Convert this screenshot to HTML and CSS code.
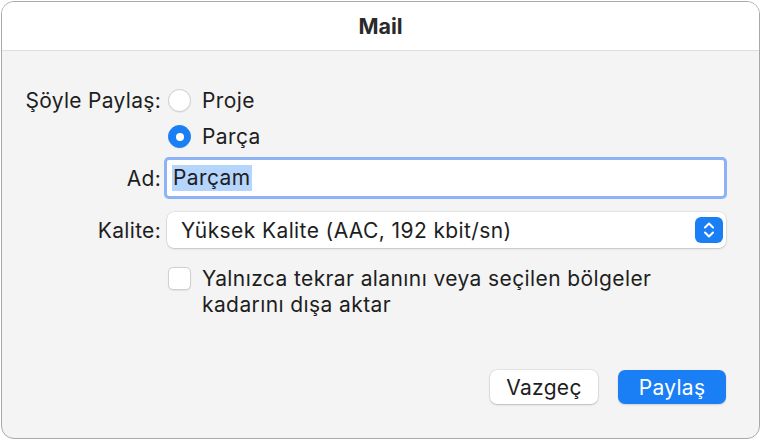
FILE: index.html
```html
<!DOCTYPE html>
<html lang="tr">
<head>
<meta charset="utf-8">
<title>Mail</title>
<link rel="stylesheet" href="styles.css">
</head>
<body>
<div class="window">
  <div class="titlebar">Mail</div>
  <div class="content">
    <div class="row row-proje">
      <div class="label">Şöyle Paylaş:</div>
      <div class="control radio-opt"><span class="radio"></span><span class="opt-text">Proje</span></div>
    </div>
    <div class="row row-parca">
      <div class="label"></div>
      <div class="control radio-opt"><span class="radio checked"></span><span class="opt-text">Parça</span></div>
    </div>
    <div class="row row-ad">
      <div class="label">Ad:</div>
      <div class="control"><div class="field"><span class="sel">Parçam</span></div></div>
    </div>
    <div class="row row-kalite">
      <div class="label">Kalite:</div>
      <div class="control"><div class="popup"><span class="popup-text">Yüksek Kalite (AAC, 192 kbit/sn)</span><span class="stepper"><svg width="28" height="26" viewBox="0 0 28 26"><path d="M10 10.5 L14 6.5 L18 10.5" fill="none" stroke="#fff" stroke-width="2" stroke-linecap="round" stroke-linejoin="round"/><path d="M10 15.5 L14 19.5 L18 15.5" fill="none" stroke="#fff" stroke-width="2" stroke-linecap="round" stroke-linejoin="round"/></svg></span></div></div>
    </div>
    <div class="row row-check">
      <div class="label"></div>
      <div class="control check-opt"><span class="checkbox"></span><span class="check-text">Yalnızca tekrar alanını veya seçilen bölgeler<br>kadarını dışa aktar</span></div>
    </div>
    <div class="buttons">
      <button class="btn">Vazgeç</button>
      <button class="btn primary">Paylaş</button>
    </div>
  </div>
</div>
</body>
</html>
```

FILE: styles.css
```css
html, body {
  margin: 0;
  padding: 0;
  background: #ffffff;
}
body {
  font-family: "Inter", "Roboto", "Liberation Sans", sans-serif;
  color: #1e1e1e;
}
.window {
  margin: 1px 0 0 1px;
  width: 759px;
  height: 438px;
  box-sizing: border-box;
  border: 1px solid #a9a9a9;
  border-radius: 13px;
  background: #f4f4f4;
  overflow: hidden;
  display: flex;
  flex-direction: column;
}
.titlebar {
  height: 48px;
  background: #ffffff;
  border-bottom: 1px solid #dedede;
  display: flex;
  align-items: center;
  justify-content: center;
  font-weight: 700;
  font-size: 21.5px;
  color: #2a2a2a;
}
.content {
  flex: 1;
  padding: 34px 33px 0 0;
  display: flex;
  flex-direction: column;
}
.row {
  display: grid;
  grid-template-columns: 159px 1fr;
  column-gap: 6px;
  align-items: center;
}
.label {
  text-align: right;
  font-size: 21px;
  letter-spacing: 0.3px;
}
.row-proje { height: 31px; }
.row-parca { height: 31px; margin-top: 5px; }
.row-ad { height: 36px; margin-top: 8px; }
.row-kalite { height: 36px; margin-top: 16px; }
.row-check { margin-top: 18px; align-items: start; }
.control {
  font-size: 21px;
  letter-spacing: 0.4px;
}
.radio-opt {
  display: flex;
  align-items: center;
}
.radio {
  width: 23px;
  height: 23px;
  box-sizing: border-box;
  border-radius: 50%;
  background: #ffffff;
  border: 1px solid #cfcfcf;
  box-shadow: 0 0.5px 1px rgba(0,0,0,0.08);
  margin-left: 1px;
  margin-right: 11px;
  display: flex;
  align-items: center;
  justify-content: center;
}
.radio.checked {
  background: #1a7ef5;
  border-color: #1a7ef5;
}
.radio.checked::after {
  content: "";
  width: 8px;
  height: 8px;
  border-radius: 50%;
  background: #ffffff;
}
.field {
  height: 36px;
  box-sizing: border-box;
  background: #ffffff;
  box-shadow: 0 0 0 3px #8db2f6;
  border-radius: 2px;
  margin-right: 2px;
  display: flex;
  align-items: center;
  padding-left: 5px;
}
.sel {
  background: #b5d5fd;
  line-height: 26px;
  padding: 0 1px;
}
.popup {
  height: 36px;
  box-sizing: border-box;
  background: #ffffff;
  border-radius: 7px;
  box-shadow: 0 0 0 0.5px rgba(0,0,0,0.12), 0 1px 2px rgba(0,0,0,0.15);
  display: flex;
  align-items: center;
  justify-content: space-between;
  padding: 0 3px 0 14px;
}
.stepper {
  width: 28px;
  height: 26px;
  border-radius: 6px;
  background: #1a7ef5;
  display: flex;
}
.check-opt {
  display: flex;
  align-items: flex-start;
}
.checkbox {
  width: 23px;
  height: 23px;
  box-sizing: border-box;
  border-radius: 5px;
  background: #ffffff;
  border: 1px solid #d0d0d0;
  box-shadow: 0 0.5px 1px rgba(0,0,0,0.08);
  margin: 0.5px 11px 0 1px;
  flex: none;
}
.check-text {
  line-height: 26px;
}
.buttons {
  margin-top: 52px;
  display: flex;
  justify-content: flex-end;
  gap: 20px;
}
.btn {
  width: 108px;
  height: 34px;
  border: none;
  border-radius: 7px;
  background: #ffffff;
  box-shadow: 0 0 0 0.5px rgba(0,0,0,0.12), 0 1px 2px rgba(0,0,0,0.18);
  font-family: inherit;
  font-size: 21px;
  letter-spacing: 0.3px;
  color: #1e1e1e;
  padding: 0;
}
.btn.primary {
  background: #1a7ef5;
  color: #ffffff;
  box-shadow: 0 1px 2px rgba(0,0,0,0.15);
}
```
